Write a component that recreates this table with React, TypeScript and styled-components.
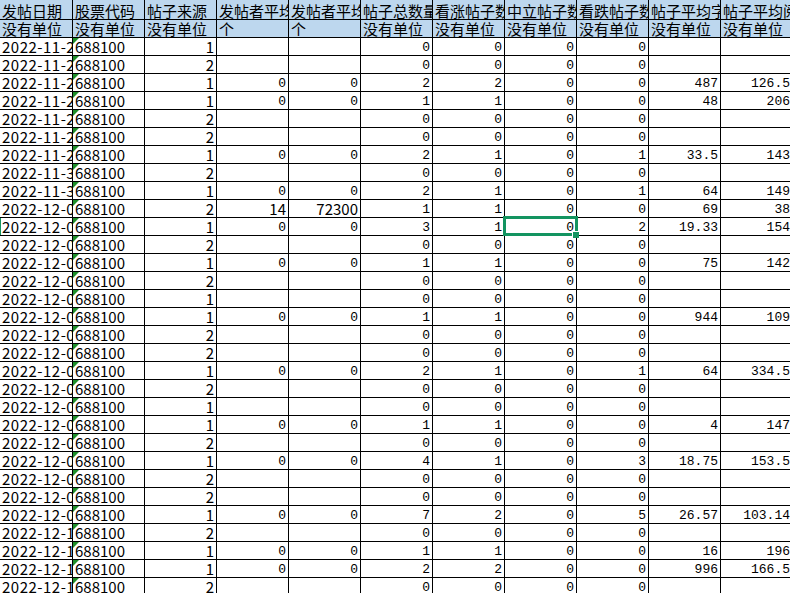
import React from "react";
import styled, { createGlobalStyle, css } from "styled-components";

const Global = createGlobalStyle`
  html, body { margin: 0; padding: 0; background: #ffffff; }
  body { overflow: hidden; }
`;

const Page = styled.div`
  width: 790px;
  height: 593px;
  overflow: hidden;
  background: #ffffff;
`;

const Sheet = styled.div`
  display: grid;
  grid-template-columns: 73px repeat(10, 72px);
  grid-template-rows: 20px;
  grid-auto-rows: 18px;
  width: 793px;
`;

const SANS = `"Noto Sans CJK SC", "Liberation Sans", sans-serif`;
const MONO = `"Liberation Mono", "DejaVu Sans Mono", monospace`;

const Cell = styled.div<{
  $head?: boolean;
  $right?: boolean;
  $mono?: boolean;
  $flag?: boolean;
  $rowMark?: boolean;
  $date?: boolean;
}>`
  position: relative;
  box-sizing: border-box;
  border-right: 1px solid #000000;
  border-bottom: 1px solid #000000;
  background: ${(p) => (p.$head ? "#bdd7ee" : "#ffffff")};
  color: #000000;
  white-space: nowrap;
  overflow: hidden;
  padding: 0 2px 0 2px;
  display: flex;
  align-items: flex-end;
  justify-content: ${(p) => (p.$right ? "flex-end" : "flex-start")};
  font-family: ${(p) => (p.$mono ? MONO : SANS)};
  font-size: ${(p) => (p.$mono ? "13px" : "15px")};
  line-height: ${(p) => (p.$mono ? "15px" : "17px")};
  letter-spacing: ${(p) => (p.$date ? "0.5px" : "0")};
  ${(p) =>
    p.$flag &&
    css`
      &::before {
        content: "";
        position: absolute;
        top: 0;
        left: 0;
        border-top: 6px solid #1f8f2a;
        border-right: 6px solid transparent;
      }
    `}
  ${(p) =>
    p.$rowMark &&
    css`
      box-shadow: inset 1px 0 0 #139460;
    `}
`;

const SelectedCell = styled(Cell)`
  overflow: visible;
  z-index: 2;
`;

const SelectionFrame = styled.div`
  position: absolute;
  top: -2px;
  left: -2px;
  right: -2px;
  bottom: -1px;
  border: 3px solid #139460;
  pointer-events: none;
`;

const FillHandle = styled.div`
  position: absolute;
  right: -3px;
  bottom: -3px;
  width: 6px;
  height: 6px;
  background: #139460;
  border-left: 1px solid #ffffff;
  border-top: 1px solid #ffffff;
`;

const headers1 = [
  "发帖日期",
  "股票代码",
  "帖子来源",
  "发帖者平均粉丝数",
  "发帖者平均关注数",
  "帖子总数量",
  "看涨帖子数",
  "中立帖子数",
  "看跌帖子数",
  "帖子平均字数",
  "帖子平均阅读数",
];

const headers2 = [
  "没有单位",
  "没有单位",
  "没有单位",
  "个",
  "个",
  "没有单位",
  "没有单位",
  "没有单位",
  "没有单位",
  "没有单位",
  "没有单位",
];

type Row = [string, string, string, string, string, string, string, string, string, string];

const E = "";
const data: Row[] = [
  ["2022-11-21", "1", E, E, "0", "0", "0", "0", E, E],
  ["2022-11-21", "2", E, E, "0", "0", "0", "0", E, E],
  ["2022-11-22", "1", "0", "0", "2", "2", "0", "0", "487", "126.5"],
  ["2022-11-23", "1", "0", "0", "1", "1", "0", "0", "48", "206"],
  ["2022-11-23", "2", E, E, "0", "0", "0", "0", E, E],
  ["2022-11-24", "2", E, E, "0", "0", "0", "0", E, E],
  ["2022-11-25", "1", "0", "0", "2", "1", "0", "1", "33.5", "143"],
  ["2022-11-30", "2", E, E, "0", "0", "0", "0", E, E],
  ["2022-11-30", "1", "0", "0", "2", "1", "0", "1", "64", "149"],
  ["2022-12-01", "2", "14", "72300", "1", "1", "0", "0", "69", "38"],
  ["2022-12-01", "1", "0", "0", "3", "1", "0", "2", "19.33", "154"],
  ["2022-12-02", "2", E, E, "0", "0", "0", "0", E, E],
  ["2022-12-02", "1", "0", "0", "1", "1", "0", "0", "75", "142"],
  ["2022-12-03", "2", E, E, "0", "0", "0", "0", E, E],
  ["2022-12-04", "1", E, E, "0", "0", "0", "0", E, E],
  ["2022-12-05", "1", "0", "0", "1", "1", "0", "0", "944", "109"],
  ["2022-12-05", "2", E, E, "0", "0", "0", "0", E, E],
  ["2022-12-06", "2", E, E, "0", "0", "0", "0", E, E],
  ["2022-12-06", "1", "0", "0", "2", "1", "0", "1", "64", "334.5"],
  ["2022-12-07", "2", E, E, "0", "0", "0", "0", E, E],
  ["2022-12-07", "1", E, E, "0", "0", "0", "0", E, E],
  ["2022-12-08", "1", "0", "0", "1", "1", "0", "0", "4", "147"],
  ["2022-12-08", "2", E, E, "0", "0", "0", "0", E, E],
  ["2022-12-09", "1", "0", "0", "4", "1", "0", "3", "18.75", "153.5"],
  ["2022-12-09", "2", E, E, "0", "0", "0", "0", E, E],
  ["2022-12-09", "2", E, E, "0", "0", "0", "0", E, E],
  ["2022-12-09", "1", "0", "0", "7", "2", "0", "5", "26.57", "103.14"],
  ["2022-12-10", "2", E, E, "0", "0", "0", "0", E, E],
  ["2022-12-11", "1", "0", "0", "1", "1", "0", "0", "16", "196"],
  ["2022-12-12", "1", "0", "0", "2", "2", "0", "0", "996", "166.5"],
  ["2022-12-13", "2", E, E, "0", "0", "0", "0", E, E],
];

const SELECTED_ROW = 10;
const SELECTED_COL = 7;
const SANS_VALUES = new Set(["14", "72300"]);

export default function App() {
  return (
    <Page>
      <Global />
      <Sheet>
        {headers1.map((h, i) => (
          <Cell key={`h1-${i}`} $head>
            {h}
          </Cell>
        ))}
        {headers2.map((h, i) => (
          <Cell key={`h2-${i}`} $head>
            {h}
          </Cell>
        ))}
        {data.map((row, r) => {
          const [date, src, ...nums] = row;
          return (
            <React.Fragment key={`r-${r}`}>
              <Cell $date $rowMark={r === SELECTED_ROW}>
                {date}
              </Cell>
              <Cell $flag>688100</Cell>
              <Cell $right>{src}</Cell>
              {nums.map((v, j) => {
                const col = j + 3;
                const mono = !SANS_VALUES.has(v);
                if (r === SELECTED_ROW && col === SELECTED_COL) {
                  return (
                    <SelectedCell key={`c-${r}-${col}`} $right $mono={mono}>
                      {v}
                      <SelectionFrame />
                      <FillHandle />
                    </SelectedCell>
                  );
                }
                return (
                  <Cell key={`c-${r}-${col}`} $right $mono={mono}>
                    {v}
                  </Cell>
                );
              })}
            </React.Fragment>
          );
        })}
      </Sheet>
    </Page>
  );
}
